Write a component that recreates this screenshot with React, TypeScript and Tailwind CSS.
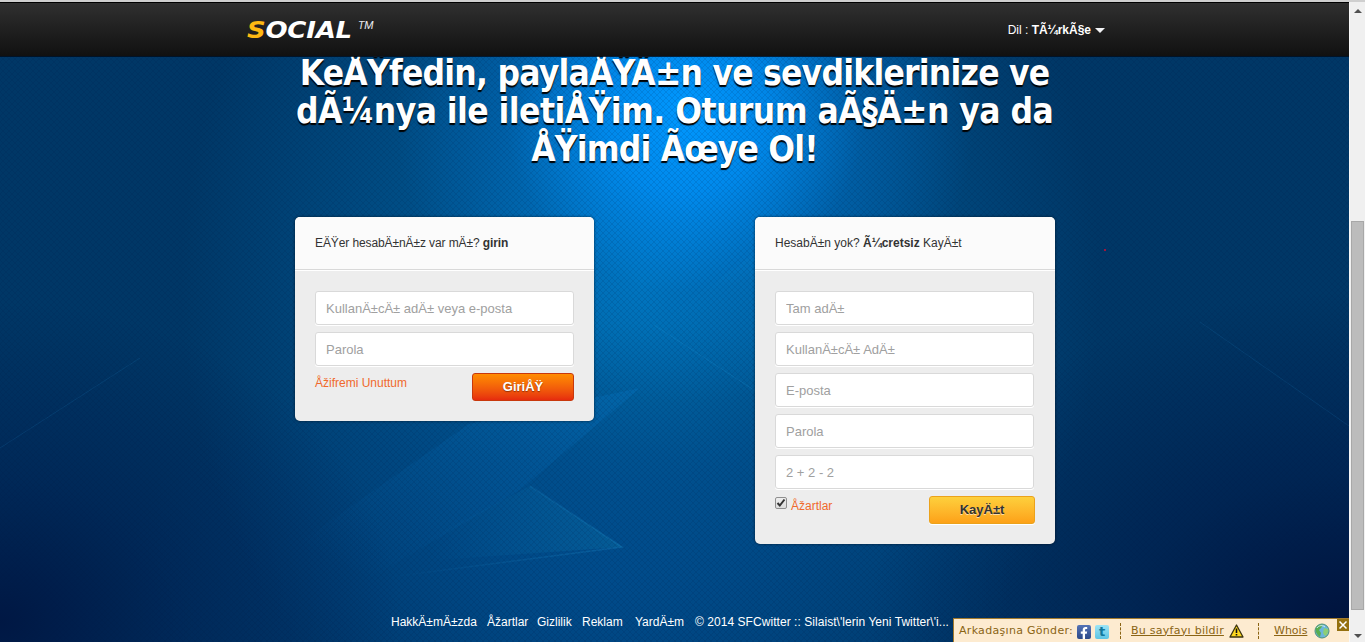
import type { ReactNode } from 'react';
import { FaFacebookF } from 'react-icons/fa';

const footerLinks = [
  { label: 'HakkÄ±mÄ±zda', width: 'w-[86px]' },
  { label: 'Åžartlar', width: 'w-[40px]' },
  { label: 'Gizlilik', width: 'w-[35px]' },
  { label: 'Reklam', width: 'w-[43px]' },
  { label: 'YardÄ±m', width: 'w-[50px]' },
];

const signupFields = ['Tam adÄ±', 'KullanÄ±cÄ± AdÄ±', 'E-posta', 'Parola', '2 + 2 - 2'];

function Backdrop() {
  return (
    <div className="absolute inset-0 -z-10 bg-[#003766]">
      <div className="absolute inset-0 bg-[radial-gradient(ellipse_460px_540px_at_640px_280px,rgba(0,126,194,0.85)_0%,rgba(0,108,176,0.55)_40%,rgba(0,70,130,0)_100%)]" />
      <div className="absolute inset-0 bg-[radial-gradient(ellipse_480px_260px_at_600px_580px,rgba(0,74,146,0.5)_0%,rgba(0,64,132,0.3)_50%,rgba(0,60,120,0)_100%)]" />
      <div className="absolute inset-0 bg-[radial-gradient(ellipse_290px_290px_at_685px_110px,rgba(0,152,255,1)_0%,rgba(0,146,252,0.82)_28%,rgba(0,120,215,0.35)_62%,rgba(0,90,170,0)_100%)]" />
      <div className="absolute inset-0 bg-[radial-gradient(ellipse_400px_320px_at_0px_620px,rgba(0,20,64,0.9)_0%,rgba(0,26,74,0.5)_45%,rgba(0,30,80,0)_100%)]" />
      <div className="absolute inset-0 bg-[radial-gradient(ellipse_480px_330px_at_1349px_620px,rgba(0,16,58,0.93)_0%,rgba(0,22,68,0.55)_45%,rgba(0,30,80,0)_100%)]" />
      <svg className="absolute inset-0" width="1349" height="640" fill="none">
        <defs>
          <linearGradient id="beam" x1="0" y1="1" x2="1" y2="0">
            <stop offset="0.2" stopColor="#0878c8" stopOpacity="0" />
            <stop offset="1" stopColor="#0878c8" stopOpacity="0.26" />
          </linearGradient>
          <linearGradient id="shard" x1="0" y1="0" x2="1" y2="0">
            <stop offset="0.2" stopColor="#0a8ad0" stopOpacity="0" />
            <stop offset="1" stopColor="#1590b8" stopOpacity="0.22" />
          </linearGradient>
          <linearGradient id="fade" gradientUnits="userSpaceOnUse" x1="390" y1="0" x2="622" y2="0">
            <stop offset="0" stopColor="#2296d4" stopOpacity="0" />
            <stop offset="1" stopColor="#2296d4" stopOpacity="0.25" />
          </linearGradient>
          <linearGradient id="plane" x1="0" y1="1" x2="1" y2="0">
            <stop offset="0.3" stopColor="#0a8ad0" stopOpacity="0" />
            <stop offset="1" stopColor="#0a8ad0" stopOpacity="0.12" />
          </linearGradient>
          <pattern id="mesh" width="6" height="6" patternUnits="userSpaceOnUse">
            <path d="M0 0l6 6M6 0L0 6" stroke="#001c40" strokeOpacity="0.12" />
          </pattern>
        </defs>
        <path d="M469 422L640 386 520 488 330 600 250 575z" fill="url(#beam)" />
        <path d="M380 562L530 484 622 545z" fill="url(#shard)" />
        <path d="M530 484L622 545 390 575" stroke="url(#fade)" strokeWidth="1.5" />
        <path d="M654 323L757 390 757 250z" fill="url(#plane)" />
        <path d="M654 323L757 390" stroke="#2296d4" strokeOpacity="0.22" />
        <path d="M0 446L140 356" stroke="#1c80bc" strokeOpacity="0.18" />
        <path d="M1200 320L1349 424" stroke="#1c80bc" strokeOpacity="0.18" />
        <rect width="1349" height="640" fill="url(#mesh)" />
      </svg>
    </div>
  );
}

function Header() {
  return (
    <header className="relative z-10 flex h-[54px] shrink-0 items-center justify-between border-t border-black bg-gradient-to-b from-[#303030] to-[#111] pt-px pr-[244px] pl-[247px] shadow-[0_1px_0_rgba(0,10,25,0.8)]">
      <div className="flex h-[20px] w-[130px] items-start">
        <span className="w-[111px] origin-left scale-x-[1.13] font-['DejaVu_Sans',Verdana,sans-serif] text-[23px] leading-[20px] font-bold tracking-[-0.2px] whitespace-nowrap text-white italic">
          <span className="text-[#fdb813]">S</span>OCIAL
        </span>
        <span className="font-[Roboto,sans-serif] text-[11px] leading-[11px] text-gray-200 italic">TM</span>
      </div>
      <div className="flex items-center text-[12px] text-white">
        <span className="whitespace-pre">Dil : </span>
        <b>TÃ¼rkÃ§e</b>
        <span className="ml-1 border-x-[5px] border-t-[5px] border-x-transparent border-t-gray-100" />
      </div>
    </header>
  );
}

function Card({ title, width, children }: { title: ReactNode; width: string; children: ReactNode }) {
  return (
    <section className={`${width} overflow-hidden rounded-[5px] bg-[#ededed] shadow-[0_0_3px_rgba(0,0,0,0.6)]`}>
      <div className="h-[53px] border-b border-[#d9d9d9] bg-[#fbfbfb] px-5 text-[12px] leading-[52px] whitespace-nowrap text-[#333]">
        {title}
      </div>
      <div className="border-t border-white px-5 pt-5 pb-5">{children}</div>
    </section>
  );
}

function Field({ placeholder }: { placeholder: string }) {
  return (
    <input
      placeholder={placeholder}
      className="mb-[7px] block h-[34px] w-[259px] rounded-[3px] border border-[#d9d9d9] bg-white px-[10px] text-[13px] shadow-[0_1px_0_#fff] placeholder:text-[#a0a0a0]"
    />
  );
}

function ShareBar() {
  return (
    <div className="absolute right-0 bottom-0 flex h-6 w-[396px] items-center border-t border-l border-[#a27a2c] bg-[#fdebd0] pt-px pl-[5px] font-['DejaVu_Sans',Verdana,sans-serif] text-[11px] whitespace-nowrap text-[#8a6414]">
      <span className="w-[118px] tracking-[0.3px]">Arkadaşına Gönder:</span>
      <span className="mt-px flex h-[14px] w-[14px] items-end justify-center rounded-[2px] bg-gradient-to-b from-[#5573b5] to-[#2b4888] text-white">
        <FaFacebookF size={12} />
      </span>
      <span className="mt-px ml-[4px] flex h-[14px] w-[14px] items-center justify-center rounded-[2px] bg-gradient-to-b from-[#9be4f5] to-[#5cc4e4] text-[13px] leading-none font-bold text-[#12789c]">
        t
      </span>
      <span className="ml-[11px] h-4 border-l border-dashed border-[#8a6414]" />
      <span className="ml-[10px] w-[98px] tracking-[0.27px] underline">Bu sayfayı bildir</span>
      <svg width="15" height="14" viewBox="0 0 15 14">
        <path d="M7.5 1L14 13H1z" fill="#ffd91f" stroke="#3b3410" strokeWidth="1.3" strokeLinejoin="round" />
        <path d="M7.5 4.5v4.5M7.5 10v1.6" stroke="#111" strokeWidth="1.6" />
      </svg>
      <span className="ml-[14px] h-4 border-l border-dashed border-[#8a6414]" />
      <span className="ml-[15px] w-[40px] underline">Whois</span>
      <svg width="16" height="16" viewBox="0 0 16 16">
        <circle cx="8" cy="8" r="7" fill="#6bb5dc" stroke="#4d8f78" />
        <path d="M2 5c2-3 5-4 7-3L7 5 5 7l2 3-1 4C3 12 1 9 2 5z" fill="#58ad50" />
        <path d="M10 5l4 1c1 3-1 6-3 7L9 10z" fill="#8bcf76" />
        <path d="M3 5c2-3 6-3 8-1" stroke="#e4f8ff" strokeOpacity="0.8" fill="none" />
      </svg>
      <span className="absolute top-0 right-0 flex h-3 w-3 items-center justify-center bg-[#94700f]">
        <svg width="10" height="10" viewBox="0 0 10 10">
          <path d="M1.5 1.5l7 7M8.5 1.5l-7 7" stroke="#fff" strokeWidth="1.5" />
        </svg>
      </span>
    </div>
  );
}

function Scrollbar() {
  return (
    <div className="flex w-4 flex-col items-center border-l border-[#f8f8f8] bg-[#f0f0f0]">
      <span className="mt-[7px] border-x-4 border-b-4 border-x-transparent border-b-[#505050]" />
      <span className="mt-[208px] h-[389px] w-[13px] border border-[#a8a8a8] bg-[#bcbcbc]" />
      <span className="mt-[24px] border-x-4 border-t-4 border-x-transparent border-t-[#505050]" />
    </div>
  );
}

export default function App() {
  return (
    <div className="flex h-[642px] w-[1365px] flex-col overflow-hidden border-t-2 border-[#cfcfcf] font-['Liberation_Sans',Arial,sans-serif]">
      <div className="flex min-h-0 flex-1">
        <div className="relative isolate flex w-[1349px] flex-col overflow-hidden">
          <Backdrop />
          <Header />

          <h1 className="-mt-[2px] flex h-[114px] shrink-0 flex-col items-center font-['DejaVu_Sans_Condensed','DejaVu_Sans',Tahoma,sans-serif] text-[35px] leading-[38px] font-bold whitespace-nowrap text-white [font-stretch:condensed] [text-shadow:0_2px_1px_#000]">
            <span className="tracking-[-0.75px]">KeÅŸfedin, paylaÅŸÄ±n ve sevdiklerinize ve</span>
            <span className="tracking-[-0.53px]">dÃ¼nya ile iletiÅŸim. Oturum aÃ§Ä±n ya da</span>
            <span className="tracking-[-0.8px]">ÅŸimdi Ãœye Ol!</span>
          </h1>

          <main className="mt-[49px] ml-[295px] flex w-[760px] items-start justify-between">
            <Card
              width="w-[299px]"
              title={<span className="tracking-[-0.1px]">EÄŸer hesabÄ±nÄ±z var mÄ±? <b>girin</b></span>}
            >
              <Field placeholder="KullanÄ±cÄ± adÄ± veya e-posta" />
              <Field placeholder="Parola" />
              <div className="flex items-start justify-between">
                <a className="mt-px text-[12px] leading-[18px] text-[#f0692c]">Åžifremi Unuttum</a>
                <button className="h-7 w-[102px] rounded-[3px] border border-[#c8380c] bg-gradient-to-b from-[#ff8c00] to-[#e62b0e] text-[13px] font-bold text-white [text-shadow:0_1px_1px_rgba(0,0,0,0.4)]">
                  GiriÅŸ
                </button>
              </div>
            </Card>

            <Card width="w-[300px]" title={<>HesabÄ±n yok? <b>Ã¼cretsiz</b> KayÄ±t</>}>
              {signupFields.map((field) => (
                <Field key={field} placeholder={field} />
              ))}
              <div className="flex items-start">
                <span className="mt-px flex h-[12px] w-[12px] items-center justify-center rounded-[2px] border border-[#909090] bg-gradient-to-b from-[#eee] to-[#ddd]">
                  <svg width="10" height="10" viewBox="0 0 10 10" className="shrink-0">
                    <path d="M1.5 5l2.3 2.5L8.5 1.5" stroke="#333" strokeWidth="2" fill="none" />
                  </svg>
                </span>
                <a className="mt-px ml-[4px] text-[12px] leading-[18px] text-[#f0692c]">Åžartlar</a>
                <button className="ml-auto h-7 w-[106px] rounded-[3px] border border-[#eba21b] bg-gradient-to-b from-[#fdd03c] to-[#fda117] text-[13px] font-bold text-[#333] shadow-[0_1px_0_#fff] [text-shadow:0_1px_0_rgba(255,255,255,0.6)]">
                  KayÄ±t
                </button>
              </div>
            </Card>
          </main>

          {/* stray marker next to the sign-up card */}
          <span className="absolute top-[247px] left-[1104px] h-[2px] w-[2px] bg-[#a0153c]" />

          <footer className="absolute bottom-[13px] left-[391px] flex gap-[10px] text-[12px] leading-[14px] whitespace-nowrap text-white">
            {footerLinks.map(({ label, width }) => (
              <a key={label} className={width}>{label}</a>
            ))}
            <span className="tracking-[0.05px]">{"© 2014 SFCwitter :: Silaist\\'lerin Yeni Twitter\\'i..."}</span>
          </footer>

          <ShareBar />
        </div>
        <Scrollbar />
      </div>
    </div>
  );
}
